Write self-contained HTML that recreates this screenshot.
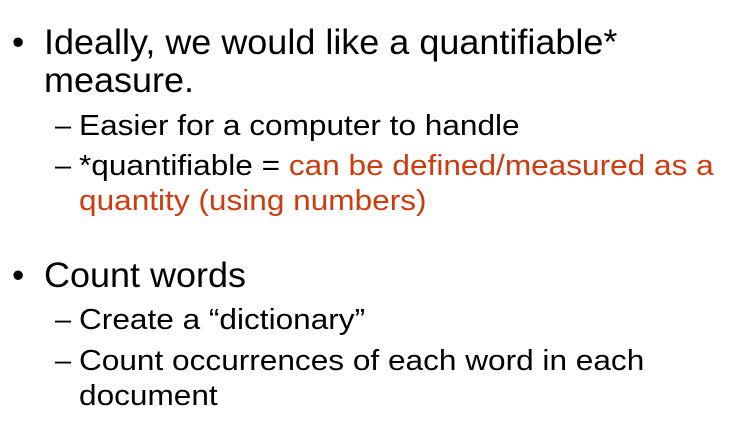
<!DOCTYPE html>
<html><head><style>
body{margin:0;width:731px;height:430px;background:#fff;position:relative;overflow:hidden;font-family:"Liberation Sans",Arial,sans-serif;color:#000}
.l{position:absolute;white-space:nowrap;transform-origin:0 0}
.b{font-size:35px;line-height:35px}
.b.t{transform:scaleX(1.028)}
.s{font-size:29px;line-height:29px}
.s.t{transform:scaleX(1.089)}
.r{color:#d03a0c}
</style></head><body>
<div class="l b" style="left:12px;top:25px">•</div>
<div class="l b t" style="left:44px;top:25px">Ideally, we would like a quantifiable*</div>
<div class="l b t" style="left:44px;top:63px">measure.</div>
<div class="l s" style="left:55px;top:112px">–</div>
<div class="l s t" style="left:79px;top:112px">Easier for a computer to handle</div>
<div class="l s" style="left:55px;top:152px">–</div>
<div class="l s t" style="left:79px;top:152px">*quantifiable = <span class="r">can be defined/measured as a</span></div>
<div class="l s r t" style="left:79px;top:187px">quantity (using numbers)</div>
<div class="l b" style="left:12px;top:258px">•</div>
<div class="l b t" style="left:44px;top:258px">Count words</div>
<div class="l s" style="left:55px;top:306px">–</div>
<div class="l s t" style="left:79px;top:306px">Create a “dictionary”</div>
<div class="l s" style="left:55px;top:347px">–</div>
<div class="l s t" style="left:79px;top:347px">Count occurrences of each word in each</div>
<div class="l s t" style="left:79px;top:382px">document</div>
</body></html>
